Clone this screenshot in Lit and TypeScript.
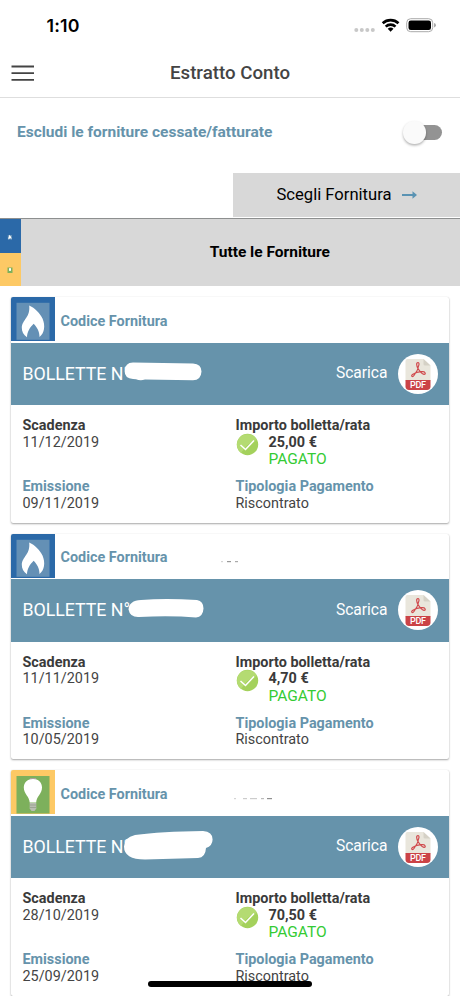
import { LitElement, html, svg, css } from "lit";
import { customElement, property } from "lit/decorators.js";
import { classMap } from "lit/directives/class-map.js";

interface Bill {
  kind: "gas" | "luce";
  label: string;
  scadenza: string;
  emissione: string;
  importo: string;
  /** Outline of the area that hides the bill number. */
  mask: string;
  /** Traces left of the hidden supply code: x, width, opacity. */
  traces: number[][];
}

const BILLS: Bill[] = [
  {
    kind: "gas",
    label: "BOLLETTE N°",
    scadenza: "11/12/2019",
    emissione: "09/11/2019",
    importo: "25,00 €",
    mask: "M122 19.600 L182 20.400 Q190.500 21 190.500 28.500 Q190 37.300 182 37.300 L134 36.600 Q129 38 125 36.200 L122 36 Q113.600 35.500 113.600 28 Q114 19.800 122 19.600Z",
    traces: [],
  },
  {
    kind: "gas",
    label: "BOLLETTE N°",
    scadenza: "11/11/2019",
    emissione: "10/05/2019",
    importo: "4,70 €",
    mask: "M130 21 Q155 19 186 21.100 Q192.500 22.500 192.500 29.500 Q192 38 185 38.500 Q160 36.500 128 38 Q119 38.500 117.500 30.500 Q118 21.500 130 21Z",
    traces: [[211, 2, 0.25], [217, 4, 0.6], [225, 3, 0.5]],
  },
  {
    kind: "luce",
    label: "BOLLETTE N°",
    scadenza: "28/10/2019",
    emissione: "25/09/2019",
    importo: "70,50 €",
    mask: "M124 19 Q150 15.500 192 15 Q201.600 15.500 201.600 23.500 Q201.500 30 195 32 Q194.500 41.500 187 42 L134 43.500 Q113 43.500 113 30.500 Q113 21.500 124 19Z",
    traces: [[224, 2, 0.25], [233, 4, 0.3], [240, 7, 0.3], [251, 3, 0.4], [257, 5, 0.65]],
  },
];

@customElement("supply-icon")
export class SupplyIcon extends LitElement {
  @property() kind: "gas" | "luce" = "gas";

  static styles = css`
    :host {
      display: block;
    }
    svg {
      display: block;
      width: 100%;
      height: 100%;
    }
  `;

  render() {
    return html`<svg viewBox="0 0 44 44" preserveAspectRatio="none">
      ${this.kind === "gas"
        ? svg`<rect width="44" height="44" fill="#2b69a8"/>
            <rect x="5.500" y="5.800" width="33" height="37" fill="#6490b5"/>
            <path d="M18.200 8.500 C23 10.500 29 16 31.500 21.500 C34.500 28.500 33.500 36 28.500 40 C28.500 34.500 26 30 22.600 26.800 C19 30.500 16.200 34.500 16 40.300 C12.500 37.800 10.600 34.500 10.800 30.500 C11.300 22.500 19.500 20.500 18.200 8.500Z" fill="#fff"/>`
        : svg`<rect width="44" height="44" fill="#fdc965"/>
            <rect x="5.500" y="6" width="33" height="37.500" fill="#7db05c"/>
            <rect x="19" y="8" width="6" height="2" fill="#a8a19a"/>
            <path d="M18.700 32.500 C18.500 26.500 12.800 24 12.800 17.500 C12.800 12.300 16.800 9 22 9 C27.200 9 31 12.300 31 17.500 C31 24 25.300 26.500 25.200 32.500Z" fill="#fff"/>
            <path d="M18.700 33 H25.300 V38.500 L23.500 41 H20.500 L18.700 38.500Z" fill="#b9bdb2"/>
            <path d="M18.700 35 H25.300 M19 37.500 H25" stroke="#8f9a85" stroke-width=".7"/>`}
    </svg>`;
  }
}

@customElement("bill-card")
export class BillCard extends LitElement {
  @property({ attribute: false }) bill!: Bill;

  static styles = css`
    :host {
      display: block;
      box-sizing: border-box;
      height: 225.500px;
      background: #fff;
      border-radius: 2px;
      overflow: hidden;
      box-shadow: 0 1px 2px rgba(0, 0, 0, 0.34), 0 0 1px rgba(0, 0, 0, 0.12);
    }
    .head {
      display: flex;
      align-items: center;
      height: 45.500px;
      position: relative;
    }
    supply-icon {
      width: 44px;
      height: 44px;
      margin-bottom: 1.500px;
    }
    .code {
      margin-left: 5.500px;
      padding-top: 3px;
      color: #6693ab;
      font-weight: 700;
      font-size: 14.400px;
    }
    .trace {
      position: absolute;
      left: 0;
      top: 26.500px;
      width: 438px;
      height: 3px;
    }
    .band {
      display: flex;
      align-items: center;
      height: 62.500px;
      background: #6693ab;
      color: #fff;
      position: relative;
    }
    .title {
      flex: 1;
      padding: 0 0 1px 11.500px;
      font-size: 17.800px;
      letter-spacing: -0.040px;
    }
    .mask {
      position: absolute;
      left: 0;
      top: 0;
      width: 438px;
      height: 62px;
    }
    .get {
      font-size: 15.600px;
      margin-right: 10.500px;
      padding-bottom: 1px;
    }
    .pdf {
      width: 40px;
      height: 40px;
      margin-right: 11px;
    }
    .pdf text {
      font: 500 9px Roboto, sans-serif;
    }
    .body {
      display: grid;
      grid-template-columns: 213px 1fr;
      row-gap: 11.500px;
      padding: 13px 0 0 11.500px;
      font-size: 14.400px;
      line-height: 16.600px;
      color: #444;
    }
    .strong {
      font-weight: 700;
      color: #3a3a3a;
    }
    .blue {
      font-weight: 700;
      color: #6693ab;
    }
    .pay {
      display: flex;
      gap: 10px;
    }
    .pay svg {
      width: 23px;
      height: 23px;
      margin-top: -2px;
    }
    .paid {
      color: #34cb34;
      font-size: 15.500px;
    }
  `;

  render() {
    const b = this.bill;
    return html`
      <div class="head">
        <supply-icon .kind=${b.kind}></supply-icon>
        <div class="code">Codice Fornitura</div>
        <svg class="trace">
          ${b.traces.map(
            ([x, w, o]) =>
              svg`<rect x=${x - 1} y="1" width=${w} height="1.200" fill="#555" opacity=${o}/>`
          )}
        </svg>
      </div>
      <div class="band">
        <div class="title">${b.label}</div>
        <svg class="mask"><path d=${b.mask} fill="#fff" /></svg>
        <div class="get">Scarica</div>
        <svg class="pdf" viewBox="0 0 40 40">
          <circle cx="20" cy="20" r="20" fill="#fff" />
          <path d="M7.500 7 Q7.500 5 9.500 5 H25.500 L32.500 11.500 V27 H7.500Z" fill="#e9e6dc" />
          <path d="M25.500 5 L32.500 11.500 H27 Q25.500 11.500 25.500 10Z" fill="#d5d1c6" />
          <path d="M7.500 26 H32.500 V33 Q32 36 29 36 H11 Q8 36 7.500 33Z" fill="#cb4346" />
          <path
            d="M20 8.500 C18 8.500 18.500 12 20 14.500 C21.500 17 24 19.800 26 20.300 C28 20.500 27.500 18 25 17.700 C21 17.300 17 18.700 14.500 20.500 C12.500 22 14.500 23.500 16 21.500 C18 19 20.500 14 21 10.500 C21 9 20.700 8.500 20 8.500Z"
            fill="none" stroke="#d04a4d" stroke-width="1.200" />
          <text x="20" y="34.400" text-anchor="middle" fill="#fff" textLength="16">PDF</text>
        </svg>
      </div>
      <div class="body">
        <div>
          <div class="strong">Scadenza</div>
          <div>${b.scadenza}</div>
        </div>
        <div>
          <div class="strong">Importo bolletta/rata</div>
          <div class="pay">
            <svg viewBox="0 0 23 23">
              <circle cx="11.500" cy="11.500" r="10.700" fill="#a4d15c" />
              <path d="M2 7 A10.700 10.700 0 0 1 21 7 Q12 9 5 20 A10.700 10.700 0 0 1 2 7Z" fill="#b4db72" />
              <path d="M4.500 12 L9.500 16.500 L18 7.500" fill="none" stroke="#fff" stroke-width="1.500" />
            </svg>
            <div>
              <div class="strong">${b.importo}</div>
              <div class="paid">PAGATO</div>
            </div>
          </div>
        </div>
        <div>
          <div class="blue">Emissione</div>
          <div>${b.emissione}</div>
        </div>
        <div>
          <div class="blue">Tipologia Pagamento</div>
          <div>Riscontrato</div>
        </div>
      </div>
    `;
  }
}

@customElement("app-root")
export class AppRoot extends LitElement {
  static styles = css`
    :host {
      display: block;
      position: relative;
      width: 460px;
      height: 996px;
      overflow: hidden;
      background: #fff;
      font-family: Roboto, "Liberation Sans", sans-serif;
    }
    .status {
      display: flex;
      justify-content: space-between;
      height: 50px;
    }
    .time {
      padding: 15px 0 0 46.500px;
      font: 600 17.800px/21px Inter, sans-serif;
      letter-spacing: 0.200px;
      color: #000;
    }
    .sys {
      width: 90px;
      height: 24px;
      margin: 14px 20px 0 0;
    }
    .bar {
      display: grid;
      grid-template-columns: 60px 1fr 60px;
      align-items: center;
      height: 47px;
      border-bottom: 1px solid #dedede;
    }
    .bar svg {
      width: 24px;
      height: 18px;
      margin: 0 0 1px 11px;
    }
    .bar h1 {
      margin: 0;
      padding-bottom: 2px;
      text-align: center;
      font-size: 18.700px;
      font-weight: 500;
      color: #444;
    }
    .filter {
      display: flex;
      align-items: center;
      justify-content: space-between;
      height: 68px;
      margin-bottom: 6.500px;
      padding: 0 18px 0 17px;
      color: #6693ab;
      font-size: 15.500px;
      font-weight: 700;
    }
    .switch {
      display: flex;
      align-items: center;
      width: 38px;
      height: 15.500px;
      margin-top: 1px;
      border-radius: 8px;
      background: #939393;
    }
    .knob {
      flex: none;
      width: 22.500px;
      height: 22.500px;
      margin-left: -1px;
      border-radius: 50%;
      background: #fafafa;
      box-shadow: 0 1.500px 2.500px rgba(0, 0, 0, 0.3);
    }
    .choose {
      display: flex;
      align-items: center;
      justify-content: center;
      gap: 10px;
      width: 227px;
      height: 44.500px;
      margin-left: auto;
      background: #d8d8d8;
      color: #000;
      font-size: 16.600px;
    }
    .choose svg {
      width: 15px;
      height: 10px;
    }
    .all {
      display: flex;
      height: 67px;
      margin-top: 1px;
      border-top: 1px solid #8d8f8f;
      background: #d8d8d8;
    }
    .kinds {
      display: grid;
      grid-template-rows: 1fr 1fr;
      width: 20.500px;
    }
    .kind {
      display: grid;
      place-items: center;
      background: #2b69a8;
    }
    .kind.luce {
      background: #fdc965;
    }
    .kind svg {
      width: 6px;
      height: 6px;
      margin-top: 2px;
    }
    .all h2 {
      flex: 1;
      align-self: center;
      box-sizing: border-box;
      margin: 0;
      padding: 0 0 2px 59px;
      text-align: center;
      font-size: 15.500px;
      font-weight: 700;
      color: #000;
    }
    .list {
      display: flex;
      flex-direction: column;
      gap: 11px;
      padding: 11px 11px 0;
    }
    .home {
      position: absolute;
      left: 148px;
      top: 981px;
      width: 164px;
      height: 5.500px;
      border-radius: 3px;
      background: #000;
    }
  `;

  render() {
    return html`
      <div class="status">
        <div class="time">1:10</div>
        <svg class="sys" viewBox="350 14 90 24">
          ${[356.300, 361.800, 367.300, 372.800].map(
            (x) => svg`<circle cx=${x} cy="30" r="2" fill="#c8c8c8"/>`
          )}
          <g fill="none" stroke="#000" stroke-width="2.600">
            <path d="M382.700 23.300 A11.500 11.500 0 0 1 398.500 23.300" />
            <path d="M385.700 26.600 A7 7 0 0 1 395.500 26.600" />
          </g>
          <path d="M387.700 28.800 A4.200 4.200 0 0 1 393.500 28.800 L390.600 31.700Z" fill="#000" />
          <rect x="406.700" y="18.700" width="26" height="13" rx="4" fill="none" stroke="#aaa" />
          <rect x="408.500" y="20.500" width="22.500" height="9.500" rx="2.300" fill="#000" />
          <path d="M434 23 Q436 23.600 436 25.200 Q436 26.800 434 27.500Z" fill="#aaa" />
        </svg>
      </div>
      <div class="bar">
        <svg viewBox="0 0 24 18">
          <path d="M.5 2.500 H23 M.5 9.200 H23 M.5 15.800 H23" stroke="#444" stroke-width="1.800" />
        </svg>
        <h1>Estratto Conto</h1>
      </div>
      <div class="filter">
        <span>Escludi le forniture cessate/fatturate</span>
        <div class="switch"><div class="knob"></div></div>
      </div>
      <div class="choose">
        <span>Scegli Fornitura</span>
        <svg viewBox="0 0 15 10">
          <path d="M0 5 H11.500" stroke="#5a93b3" stroke-width="2" />
          <path d="M10.500 1.300 L15 5 L10.500 8.700Z" fill="#5a93b3" />
        </svg>
      </div>
      <div class="all">
        <div class="kinds">
          ${["gas", "luce"].map(
            (k) => html`<div class=${classMap({ kind: true, luce: k === "luce" })}>
              <svg viewBox="0 0 6 6">
                ${k === "gas"
                  ? svg`<rect x=".8" y="1" width="4.200" height="4.500" fill="#6490b5"/>
                      <path d="M2.500 .8 Q4.800 3 4.500 5.500 L3.200 4 L1.500 5.500 Q1 4 2.500 .8Z" fill="#fff"/>`
                  : svg`<rect x=".5" y=".5" width="5" height="5.500" fill="#7db05c"/>
                      <rect x="2" y="1" width="2" height="3" rx=".8" fill="#fff"/>`}
              </svg>
            </div>`
          )}
        </div>
        <h2>Tutte le Forniture</h2>
      </div>
      <div class="list">
        ${BILLS.map((b) => html`<bill-card .bill=${b}></bill-card>`)}
      </div>
      <div class="home"></div>
    `;
  }
}
